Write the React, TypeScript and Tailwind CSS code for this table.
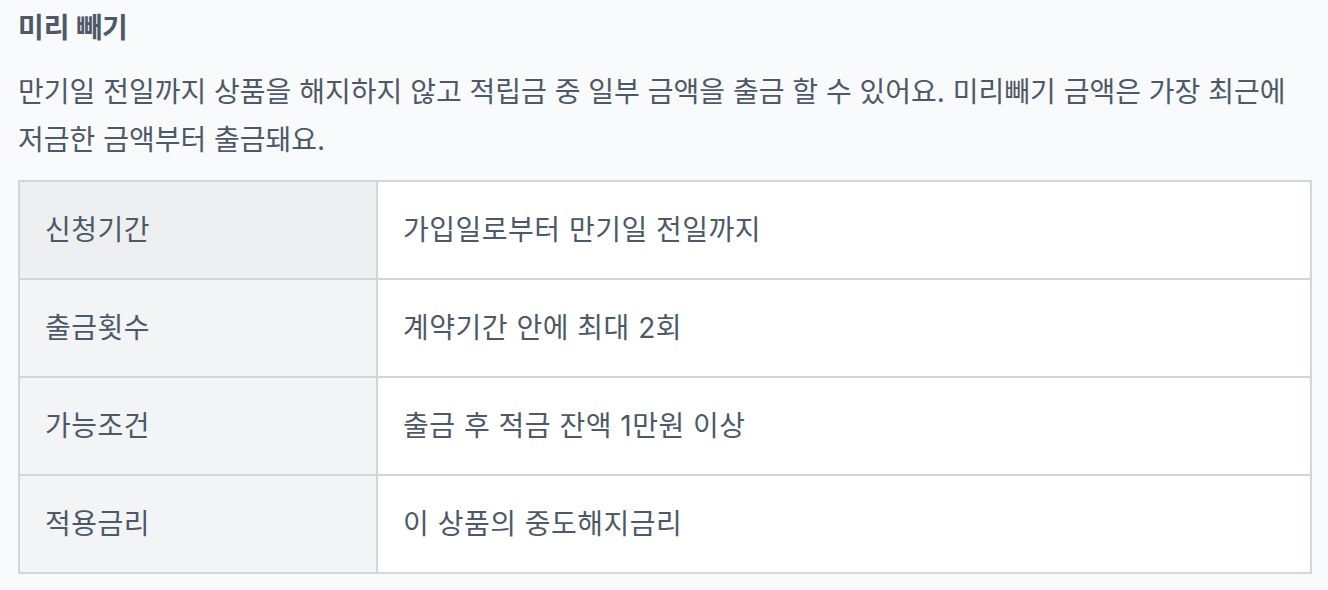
const rows = [
	{ label: "신청기간", value: "가입일로부터 만기일 전일까지" },
	{ label: "출금횟수", value: "계약기간 안에 최대 2회" },
	{ label: "가능조건", value: "출금 후 적금 잔액 1만원 이상" },
	{ label: "적용금리", value: "이 상품의 중도해지금리" },
];

export default function App() {
	return (
		<div
			className="min-h-[590px] w-full bg-[#f9fafb] px-[18px] pt-[8px] text-[#4e5968]"
			style={{ fontFamily: 'Inter, "Noto Sans CJK KR", sans-serif' }}
		>
			<h3 className="text-[28px] font-bold leading-[40px]">미리 빼기</h3>
			<p className="mt-[20px] mb-[16px] max-w-[1282px] break-keep text-[28px] leading-[48px]">
				만기일 전일까지 상품을 해지하지 않고 적립금 중 일부 금액을 출금 할 수 있어요. 미리빼기 금액은 가장 최근에 저금한 금액부터 출금돼요.
			</p>
			<table className="w-[1294px] border-collapse border-2 border-[#d1d6db]">
				<tbody>
					{rows.map((r, i) => (
						<tr key={r.label} className="h-[98px]">
							<td
								className={`w-[358px] border-2 border-[#d1d6db] px-[25px] align-middle text-[28px] tracking-[0.5px] ${
									i === 0 ? "bg-[#eeeff1]" : "bg-[#f2f4f6]"
								}`}
							>
								{r.label}
							</td>
							<td className="border-2 border-[#d1d6db] bg-white px-[25px] align-middle text-[28px] tracking-[0.5px]">
								{r.value}
							</td>
						</tr>
					))}
				</tbody>
			</table>
		</div>
	);
}
